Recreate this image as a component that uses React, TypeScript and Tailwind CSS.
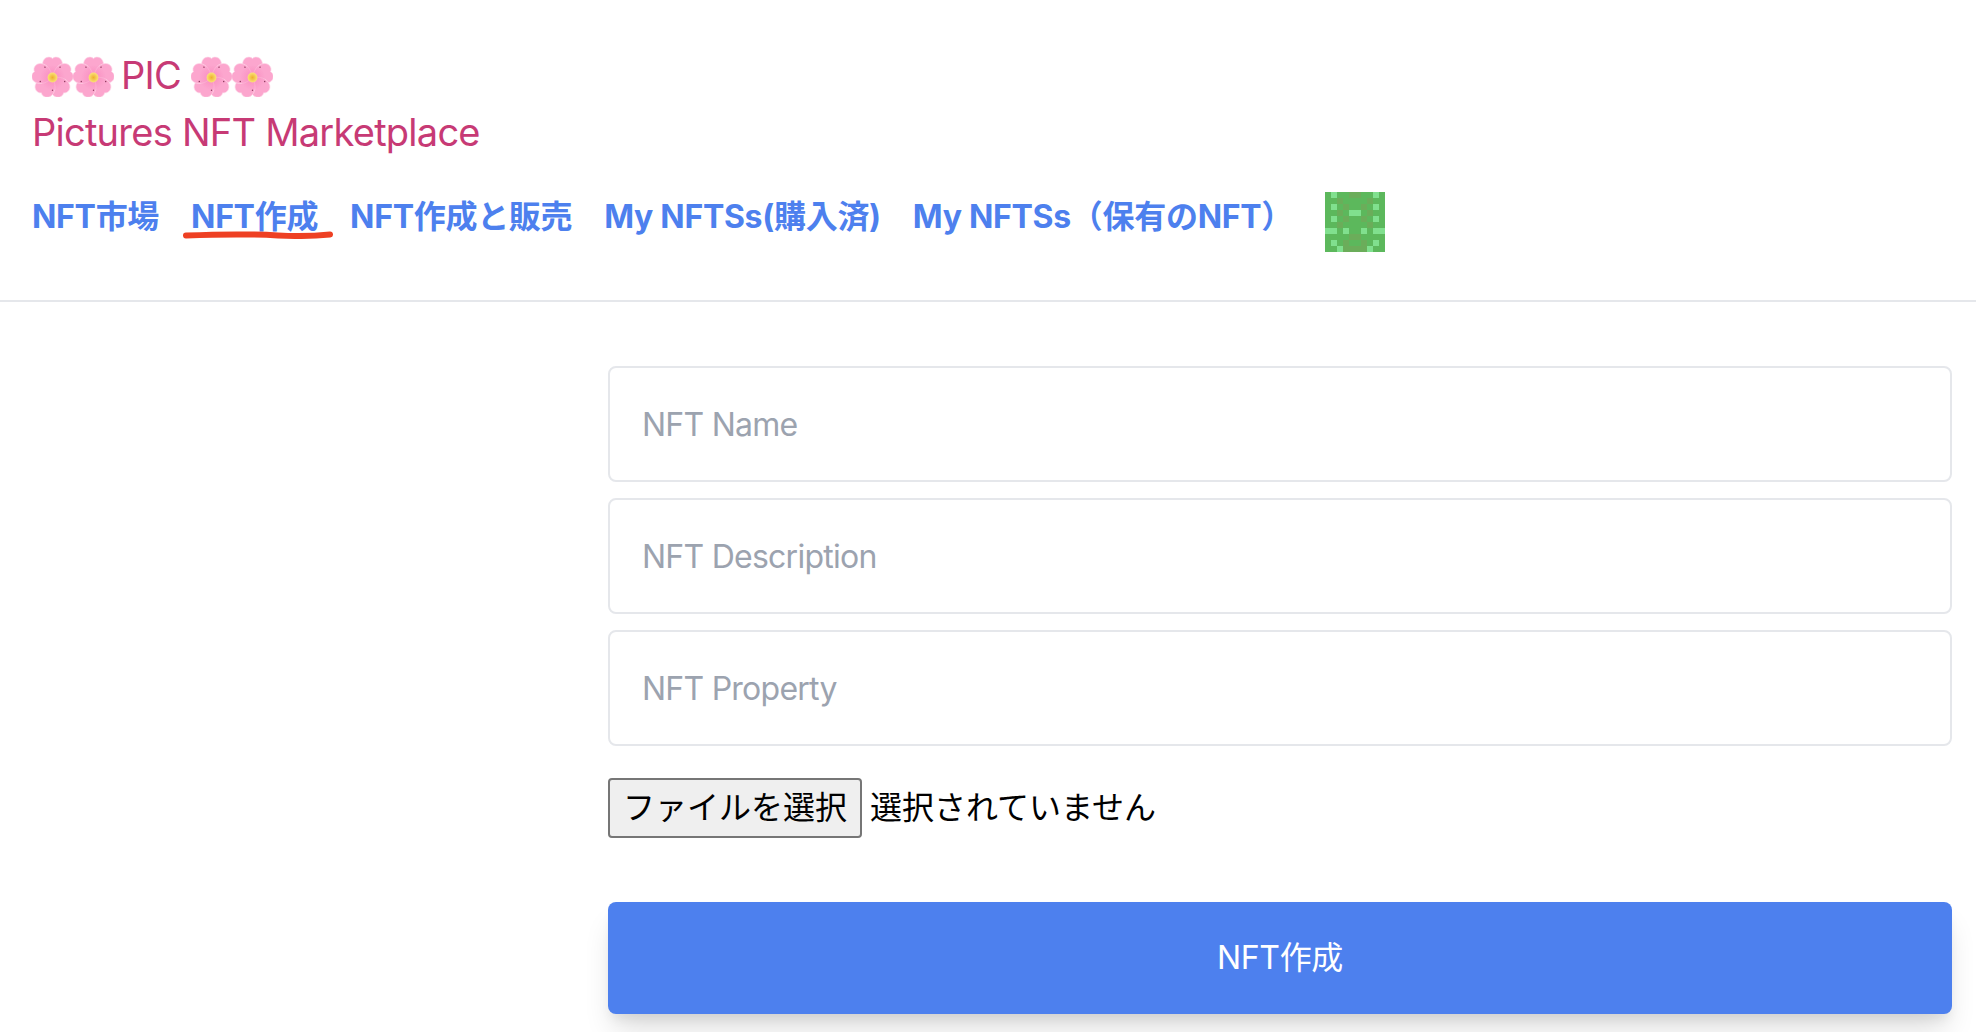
import React from 'react';

const sans = "font-['Inter','Noto_Sans_CJK_JP',sans-serif]";

const Blossom: React.FC = () => (
  <svg viewBox="0 0 40 40" className="inline-block h-[41px] w-[41px] align-[-8px]">
    <defs>
      <radialGradient id="petal" gradientUnits="userSpaceOnUse" cx="20" cy="21" r="20">
        <stop offset="0%" stopColor="#f771ae" />
        <stop offset="50%" stopColor="#fb9cc9" />
        <stop offset="100%" stopColor="#fec6e0" />
      </radialGradient>
      <radialGradient id="core" cx="50%" cy="50%" r="50%">
        <stop offset="0%" stopColor="#eeb02e" />
        <stop offset="100%" stopColor="#fae27a" />
      </radialGradient>
    </defs>
    {[0, 72, 144, 216, 288].map((a) => (
      <path
        key={a}
        transform={`rotate(${a} 20 21)`}
        d="M20 21C14 18 9 12.5 10.5 6C11.5 1.5 17 -0.5 20 2.5C23 -0.5 28.5 1.5 29.5 6C31 12.5 26 18 20 21Z"
        fill="#fca6ce"
        stroke="#fed9e9"
        strokeWidth="0.6"
      />
    ))}
    <circle cx="20" cy="21" r="12" fill="url(#petal)" opacity="0.5" />
    {[36, 108, 180, 252, 324].map((a) => (
      <circle key={a} cx="20" cy="8.5" r="0.7" fill="#8c3a5c" transform={`rotate(${a} 20 21)`} />
    ))}
    <circle cx="20" cy="21" r="4.8" fill="url(#core)" />
  </svg>
);

const lightCells = [
  [0, 1], [0, 8], [2, 1], [2, 8], [3, 4], [3, 5], [4, 1], [4, 8],
  [6, 0], [6, 1], [6, 3], [6, 6], [6, 8], [6, 9], [8, 1], [8, 8], [9, 2], [9, 7],
];

const oliveCells = [
  [0, 4], [0, 5], [1, 2], [1, 7], [2, 3], [2, 6], [3, 2], [3, 7], [4, 3], [4, 6],
  [5, 2], [5, 7], [7, 4], [7, 5], [8, 3], [8, 6], [9, 3], [9, 4], [9, 5], [9, 6],
];

const Avatar: React.FC = () => (
  <svg viewBox="0 0 10 10" className="h-[60px] w-[60px] shrink-0" shapeRendering="crispEdges">
    <rect width="10" height="10" fill="#5cb85c" />
    {oliveCells.map(([r, c]) => (
      <rect key={`o${r}-${c}`} x={c} y={r} width="1" height="1" fill="#6bad5a" />
    ))}
    {lightCells.map(([r, c]) => (
      <rect key={`l${r}-${c}`} x={c} y={r} width="1" height="1" fill="#80e08e" />
    ))}
  </svg>
);

const navClass = 'mr-8 pb-[10px] text-[32px] font-bold tracking-[-0.3px] text-[#4d80ee] whitespace-nowrap';
const inputClass =
  'h-[116px] rounded-lg border-2 border-[#e5e7eb] px-[32px] text-[32px] tracking-[-0.75px] outline-none placeholder:text-[#9ca3af]';

const App: React.FC = () => {
  return (
    <div className={`${sans} bg-white h-[1032px] overflow-hidden`}>
      <nav className="border-b-2 border-[#e5e7eb] px-8 pt-[47px] pb-[48px]">
        <p className="text-[38px] leading-[57px] tracking-[-0.7px] text-[#c73a75]">
          <Blossom />
          <Blossom /> <span className="-ml-[3px]">PIC</span> <Blossom />
          <Blossom />
        </p>
        <p className="text-[38px] leading-[57px] tracking-[-0.75px] text-[#c73a75]">Pictures NFT Marketplace</p>
        <div className="mt-[31px] flex items-center">
          <a className={navClass}>NFT市場</a>
          <a className={`${navClass} relative`}>
            NFT作成
            <svg viewBox="0 0 150 8" className="absolute left-[-8px] top-[38px] h-[8px] w-[150px]" fill="none">
              <path d="M3 4.5C40 3 70 3 95 4.5C115 5.5 132 5 147 3.5" stroke="#ee4023" strokeWidth="6" strokeLinecap="round" />
            </svg>
          </a>
          <a className={navClass}>NFT作成と販売</a>
          <a className={navClass}>My NFTSs(購入済)</a>
          <a className={navClass}>My NFTSs（保有のNFT）</a>
          <Avatar />
        </div>
      </nav>
      <div className="flex justify-end pr-6 pt-[64px]">
        <div className="flex w-[1344px] flex-col gap-4">
          <input placeholder="NFT Name" className={inputClass} />
          <input placeholder="NFT Description" className={inputClass} />
          <input placeholder="NFT Property" className={inputClass} />
          <div className="mt-4 flex items-center text-[32px] text-black font-['Liberation_Sans','Noto_Sans_CJK_JP',sans-serif]">
            <button className="h-[60px] w-[254px] rounded-[4px] border-2 border-[#767676] bg-[#efefef] text-center">
              ファイルを選択
            </button>
            <span className="ml-2">選択されていません</span>
          </div>
          <button className="mt-12 h-[112px] rounded-lg bg-[#4d80ee] text-[32px] font-normal tracking-[-0.3px] text-white shadow-[0_20px_30px_-6px_rgba(0,0,0,0.14),0_8px_12px_-4px_rgba(0,0,0,0.08)]">
            NFT作成
          </button>
        </div>
      </div>
    </div>
  );
};

export default App;
